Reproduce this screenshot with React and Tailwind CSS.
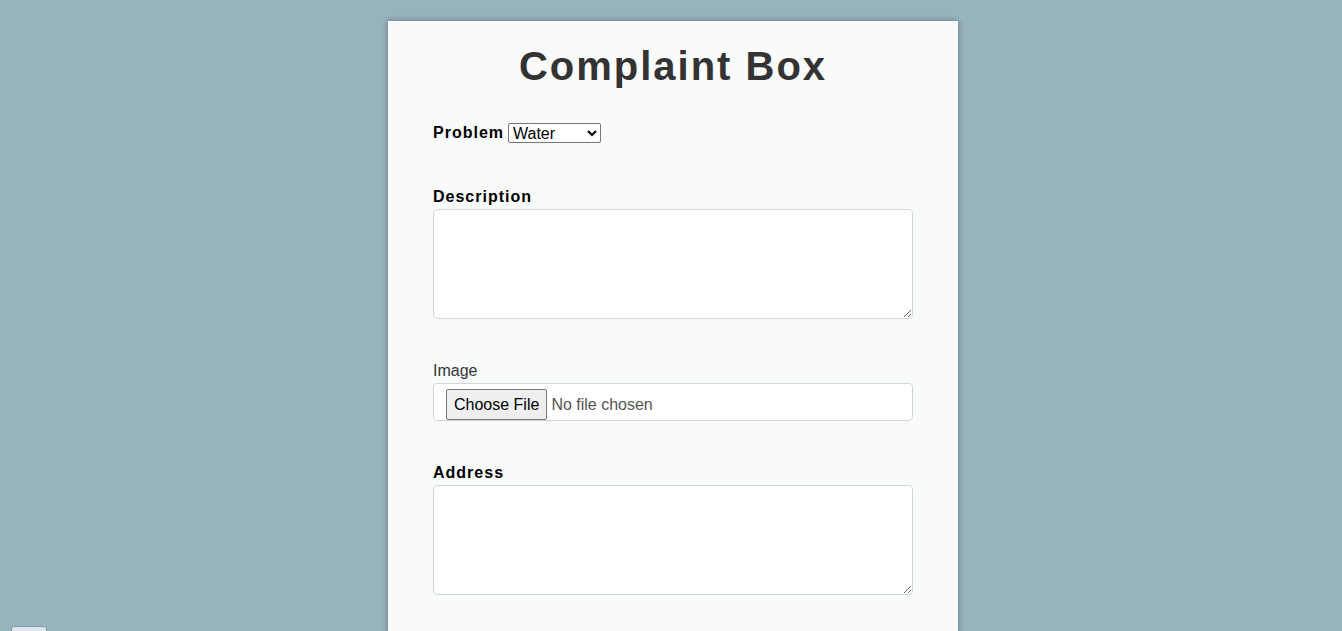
export default function App() {
  return (
    <div
      className="relative min-h-screen bg-[#97b3be] pl-[4px] pt-[21px]"
      style={{ fontFamily: '"Liberation Sans", Arial, sans-serif' }}
    >
      {/* card */}
      <div className="mx-auto w-[570px] bg-[#f9fbfb] px-[45px] pb-[80px] shadow-[0_0_6px_rgba(0,0,0,0.35)]">
        <h1 className="pt-[22px] text-center text-[40px] font-bold leading-[46px] tracking-[2px] text-[#333333]">
          Complaint Box
        </h1>

        <div className="mt-[34px] flex h-[20px] items-center gap-[4px]">
          <label className="text-[16px] font-bold tracking-[1px] text-black">Problem</label>
          <select className="h-[20px] w-[93px] rounded-[2px] border border-[#767676] bg-white text-[16px] leading-[18px] text-black">
            <option>Water</option>
            <option>Electricity</option>
            <option>Road</option>
          </select>
        </div>

        <div className="mt-[44px]">
          <label className="block h-[18px] text-[16px] font-bold leading-[20px] tracking-[1px] text-black">
            Description
          </label>
          <textarea className="mt-[4px] block h-[110px] w-[480px] rounded-[4px] border border-[#cfd5dc] bg-white" />
        </div>

        <div className="mt-[42px]">
          <label className="block h-[18px] text-[16px] leading-[20px] text-[#333333]">Image</label>
          <input
            type="file"
            className="mt-[4px] block h-[38px] w-[480px] rounded-[4px] border border-[#cfd5dc] bg-white py-[5px] pl-[12px] text-[16px] leading-[27px] text-[#555555] file:mr-[4px] file:h-[31px] file:rounded-[2px] file:border file:border-[#767676] file:bg-[#efefef] file:px-[7px] file:text-[16px] file:text-black"
          />
        </div>

        <div className="mt-[42px]">
          <label className="block h-[18px] text-[16px] font-bold leading-[20px] tracking-[1px] text-black">
            Address
          </label>
          <textarea className="mt-[4px] block h-[110px] w-[480px] rounded-[4px] border border-[#cfd5dc] bg-white" />
        </div>
      </div>

      {/* stray button at the bottom-left */}
      <button className="absolute left-[11px] top-[626px] h-[20px] w-[36px] rounded-[3px] border border-[#8a9aa2] bg-[#dde6ea]" />
    </div>
  );
}
